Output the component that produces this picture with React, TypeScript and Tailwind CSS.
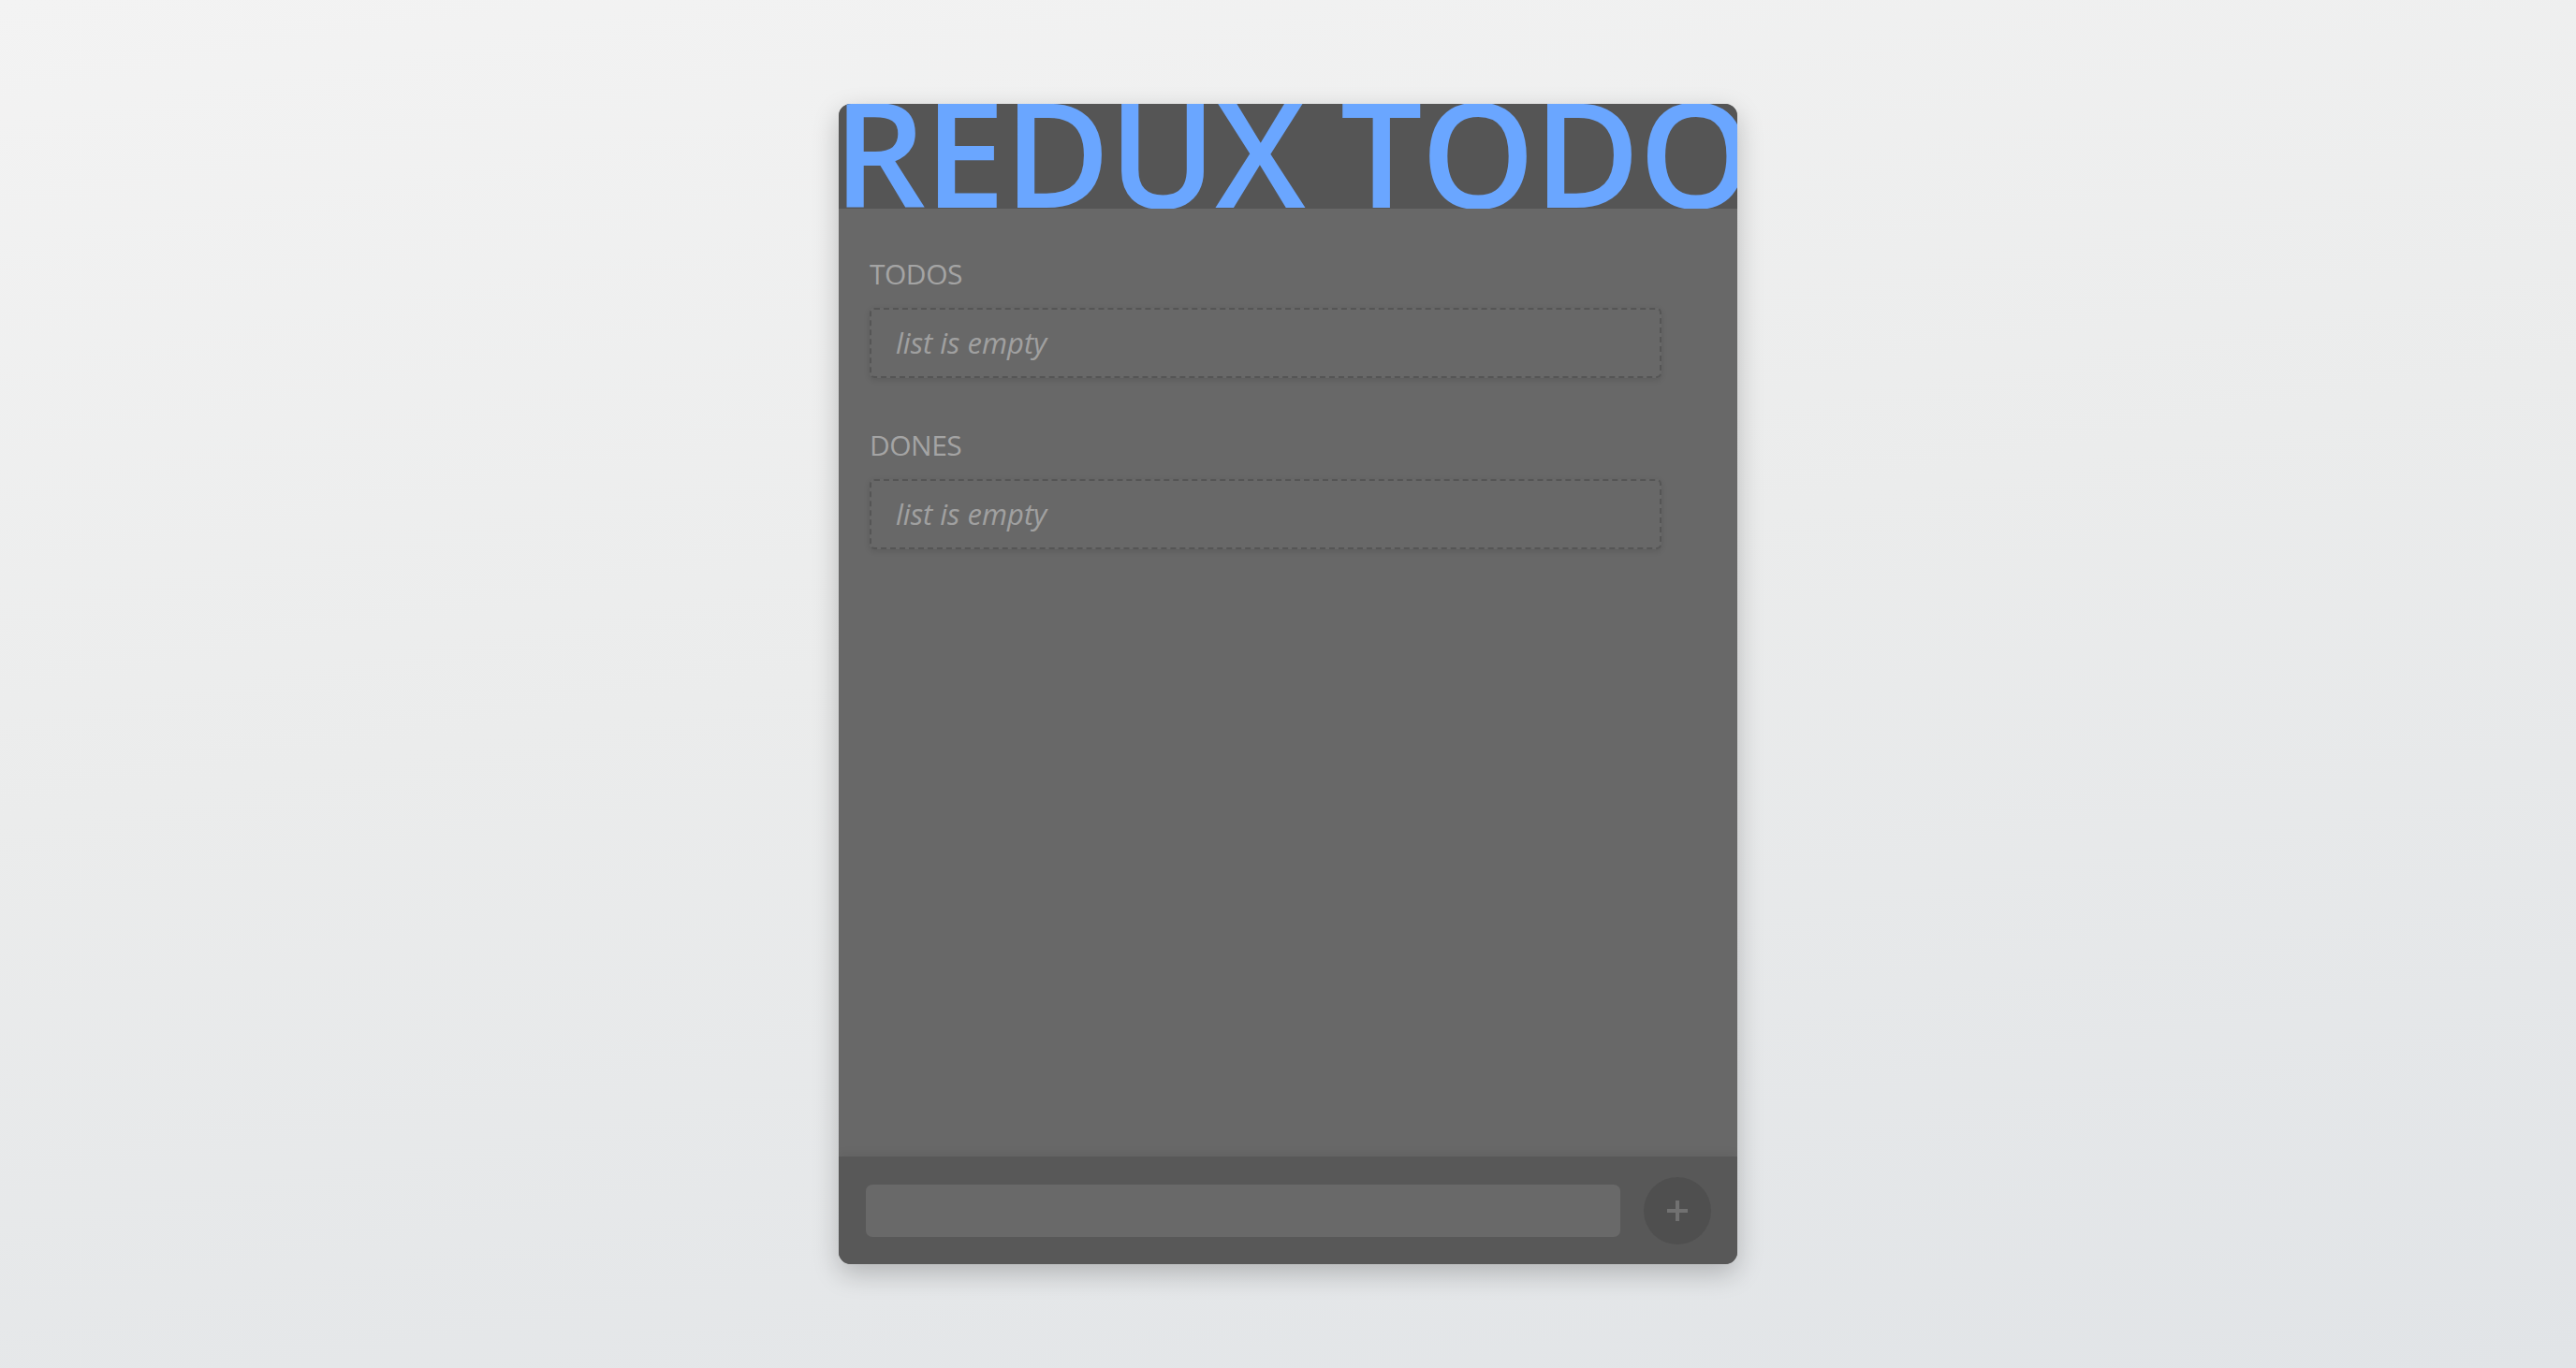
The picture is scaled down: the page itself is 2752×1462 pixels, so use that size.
import React from "react";

function Section({ title }: { title: string }) {
  return (
    <div className="mb-[52px]">
      <div className="text-[30px] leading-[40px] font-medium text-[#a4a4a4] mb-[16px] tracking-[-0.5px]">{title}</div>
      <div className="w-[846px] h-[75px] border-2 border-dashed border-[#555555] rounded-[5px] flex items-center pl-[26px] shadow-[0_2px_6px_rgba(0,0,0,0.12)]">
        <span className="italic text-[31px] text-[#a0a0a0]">list is empty</span>
      </div>
    </div>
  );
}

export default function App() {
  return (
    <div
      className="min-h-screen w-full flex items-center justify-center bg-[linear-gradient(170deg,#f3f3f3_0%,#ebecec_45%,#e1e4e7_100%)]"
      style={{ fontFamily: '"Open Sans", "Noto Sans", sans-serif' }}
    >
      <div className="w-[960px] h-[1240px] rounded-[13px] overflow-hidden flex flex-col bg-[#686868] shadow-[0_10px_28px_rgba(0,0,0,0.22)]">
        <div className="h-[112px] shrink-0 bg-[#555555] overflow-hidden">
          <h1 className="-mt-[5px] -ml-[6px] text-[155px] leading-[112px] font-[625] text-[#6aa6ff] whitespace-nowrap tracking-[-1.5px]">
            REDUX TODO
          </h1>
        </div>
        <div className="flex-1 pt-[50px] pl-[33px]">
          <Section title="TODOS" />
          <Section title="DONES" />
        </div>
        <div className="h-[115px] shrink-0 bg-[#585858] flex items-center pl-[29px] pr-[28px] gap-[25px] shadow-[0_-3px_10px_rgba(0,0,0,0.06)]">
          <div className="w-[806px] h-[56px] rounded-[7px] bg-[#696969]" />
          <div className="w-[72px] h-[72px] rounded-full bg-[#4f4f4f] flex items-center justify-center">
            <svg width="24" height="24" viewBox="0 0 24 24">
              <path d="M12 1v22M1 12h22" stroke="#717171" strokeWidth="4" />
            </svg>
          </div>
        </div>
      </div>
    </div>
  );
}
